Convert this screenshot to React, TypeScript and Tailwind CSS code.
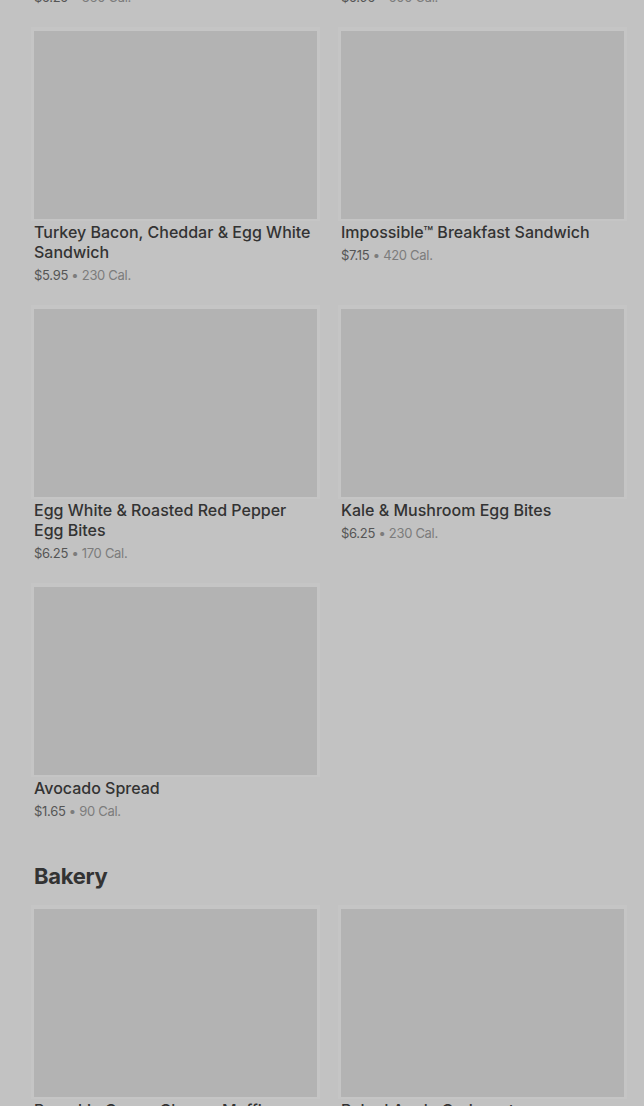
import React from "react";

type Item = { name: string; price: string; cal: string };

const Card = ({ item }: { item: Item }) => (
  <div className="flex flex-col">
    <div className="h-[188px] w-full bg-[#b3b3b3] shadow-[0_-1px_0_3px_rgba(255,255,255,0.06)]" />
    <div className="mt-[3px] text-[16px] leading-[20px] font-medium text-[#333333] tracking-[0px]">
      {item.name}
    </div>
    <div className="mt-[3px] text-[13px] leading-[20px] text-[#555555] tracking-[-0.3px]">
      <span>{item.price}</span>
      <span className="text-[#7c7c7c]"> • {item.cal}</span>
    </div>
  </div>
);

const breakfast: Item[] = [
  { name: "Turkey Bacon, Cheddar & Egg White Sandwich", price: "$5.95", cal: "230 Cal." },
  { name: "Impossible™ Breakfast Sandwich", price: "$7.15", cal: "420 Cal." },
  { name: "Egg White & Roasted Red Pepper Egg Bites", price: "$6.25", cal: "170 Cal." },
  { name: "Kale & Mushroom Egg Bites", price: "$6.25", cal: "230 Cal." },
  { name: "Avocado Spread", price: "$1.65", cal: "90 Cal." },
];

const bakery: Item[] = [
  { name: "Pumpkin Cream Cheese Muffin", price: "$3.45", cal: "350 Cal." },
  { name: "Baked Apple Croissant", price: "$3.95", cal: "260 Cal." },
];

export default function App() {
  return (
    <div
      className="w-[644px] h-[1106px] overflow-hidden bg-[#c2c2c2]"
      style={{ fontFamily: "Inter, 'Noto Sans', sans-serif" }}
    >
      <div className="pl-[34px] pr-[20px] -mt-[13px]">
        <div className="grid grid-cols-2 gap-x-[24px] text-[13px] leading-[20px] text-[#555555] tracking-[-0.3px]">
          <div>
            $5.25<span className="text-[#7c7c7c]"> • 360 Cal.</span>
          </div>
          <div>
            $5.95<span className="text-[#7c7c7c]"> • 500 Cal.</span>
          </div>
        </div>
        <div className="mt-[24px] grid grid-cols-2 gap-x-[24px] gap-y-[24px]">
          {breakfast.map((it) => (
            <Card key={it.name} item={it} />
          ))}
        </div>
        <h2 className="mt-[41px] mb-[19px] text-[22px] leading-[28px] font-bold text-[#333333] tracking-[-0.3px]">
          Bakery
        </h2>
        <div className="grid grid-cols-2 gap-x-[24px] gap-y-[24px]">
          {bakery.map((it) => (
            <Card key={it.name} item={it} />
          ))}
        </div>
      </div>
    </div>
  );
}
